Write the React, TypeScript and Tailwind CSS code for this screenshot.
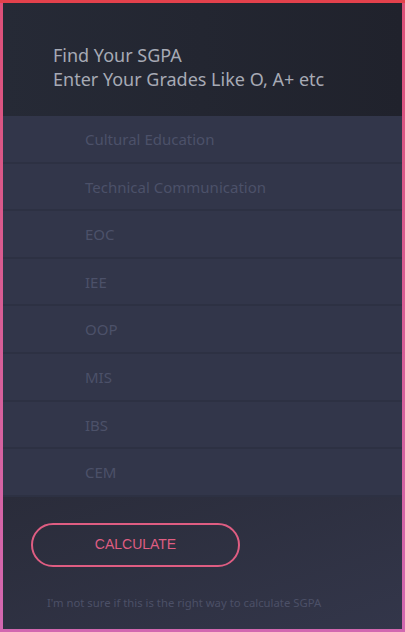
import React from "react";

const subjects: string[] = [
   "Cultural Education",
   "Technical Communication",
   "EOC",
   "IEE",
   "OOP",
   "MIS",
   "IBS",
   "CEM",
];

const App: React.FC = () => {
   return (
      <div className="w-[405px] h-[632px] bg-gradient-to-b from-[#dc5078] to-[#d268b0] px-[3px] pb-[3px] border-t-[3px] border-[#e3414c] font-['Noto_Sans',sans-serif]">
         <div className="flex flex-col h-full bg-[#2b2e3c]">
            <div className="h-[113px] shrink-0 bg-gradient-to-r from-[#262a36] to-[#20222c] pl-[50px] pt-[40px] text-[18px] leading-[24px] text-[#a7aab5]">
               <p>Find Your SGPA</p>
               <p>Enter Your Grades Like O, A+ etc</p>
            </div>
            <div className="flex flex-col bg-[#32364a]">
               {subjects.map((subject) => (
                  <div
                     key={subject}
                     className="h-[47.6px] flex items-center pl-[82px] pt-[1px] border-b-2 border-[#2d3143] text-[15px] text-[#4c5169]"
                  >
                     {subject}
                  </div>
               ))}
            </div>
            <div className="flex-1 bg-gradient-to-br from-[#2a2c3a] to-[#33364a] pl-[28px] pt-[26px]">
               <button className="w-[209px] h-[44px] rounded-full border-2 border-[#df5d82] text-[#df5d82] text-[14px] font-['Liberation_Sans',sans-serif]">
                  CALCULATE
               </button>
               <p className="mt-[28px] pl-[16px] text-[11.3px] text-[#4c5067]">
                  I'm not sure if this is the right way to calculate SGPA
               </p>
            </div>
         </div>
      </div>
   );
};

export default App;
